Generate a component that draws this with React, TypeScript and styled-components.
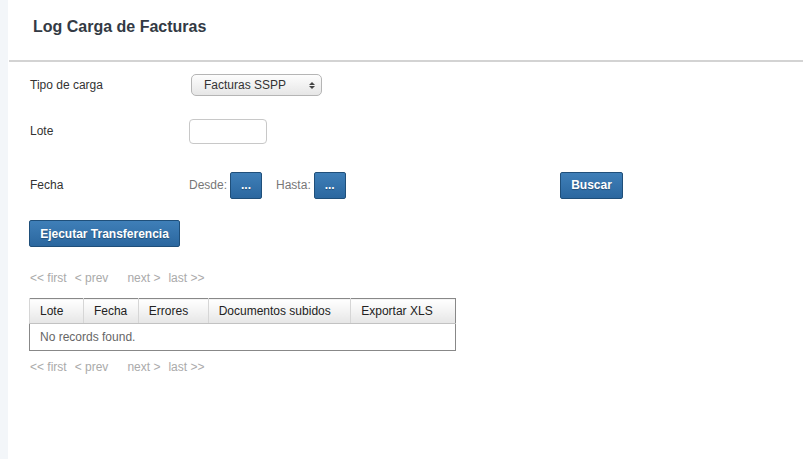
import styled, { createGlobalStyle } from "styled-components";

const GlobalStyle = createGlobalStyle`
  html, body {
    margin: 0;
    padding: 0;
    background: #fff;
    font-family: "Liberation Sans", Arial, sans-serif;
  }
`;

const Page = styled.div`
  display: flex;
  min-height: 459px;
`;

const SideStrip = styled.div`
  width: 8px;
  flex-shrink: 0;
  background: #f3f6f9;
`;

const Main = styled.div`
  flex: 1;
  padding-left: 1px;
`;

const Header = styled.div`
  display: flex;
  align-items: center;
  padding-left: 24px;
  border-bottom: 2px solid #d3d3d3;
  box-sizing: border-box;
  height: 62px;
  padding-bottom: 6px;
`;

const Title = styled.h1`
  margin: 0;
  font-size: 16px;
  font-weight: bold;
  color: #333a44;
`;

const Body = styled.div`
  padding: 0 0 0 20px;
`;

const FormGrid = styled.div`
  display: grid;
  grid-template-columns: 160px auto;
  align-items: center;
  width: 594px;
`;

const Label = styled.div<{ $h: number }>`
  font-size: 12px;
  color: #333;
  height: ${(p) => p.$h}px;
  display: flex;
  align-items: center;
  padding-left: 1px;
`;

const Cell = styled.div<{ $h: number }>`
  height: ${(p) => p.$h}px;
  display: flex;
  align-items: center;
`;

const Select = styled.div`
  margin-left: 2px;
  width: 131px;
  height: 22px;
  box-sizing: border-box;
  border: 1px solid #b5b5b5;
  border-radius: 5px;
  background: linear-gradient(#fdfdfd, #e6e6e6);
  display: flex;
  align-items: center;
  justify-content: space-between;
  padding: 0 6px 0 12px;
  font-size: 12px;
  color: #333;
`;

const Arrows = styled.span`
  display: flex;
  flex-direction: column;
  gap: 1px;
  &::before,
  &::after {
    content: "";
    border-left: 3px solid transparent;
    border-right: 3px solid transparent;
  }
  &::before {
    border-bottom: 3px solid #444;
  }
  &::after {
    border-top: 3px solid #444;
  }
`;

const TextInput = styled.input`
  width: 78px;
  height: 25px;
  box-sizing: border-box;
  border: 1px solid #c8c8c8;
  border-radius: 4px;
  padding: 0 4px;
  outline: none;
`;

const DateRow = styled.div`
  display: flex;
  align-items: center;
  width: 100%;
`;

const DateLabel = styled.span`
  font-size: 12px;
  color: #777;
  margin-right: 3px;
`;

const BlueButton = styled.button<{ $w: number }>`
  width: ${(p) => p.$w}px;
  height: 27px;
  box-sizing: border-box;
  border: 1px solid #1f4f7a;
  border-radius: 2px;
  background: linear-gradient(#3f7fb8, #2b679f);
  color: #fff;
  font-family: "Liberation Sans", Arial, sans-serif;
  font-size: 12px;
  font-weight: bold;
  text-shadow: 0 1px 1px rgba(0, 0, 0, 0.3);
  padding: 0;
  cursor: pointer;
`;

const Spacer = styled.span<{ $w: number }>`
  width: ${(p) => p.$w}px;
  flex-shrink: 0;
`;

const Grow = styled.span`
  flex: 1;
`;

const ActionRow = styled.div<{ $top: number }>`
  margin-top: ${(p) => p.$top}px;
`;

const Pager = styled.div`
  display: flex;
  gap: 8px;
  font-size: 12px;
  color: #aaa;
  padding-left: 1px;
  height: 16px;
  align-items: center;
`;

const PagerGap = styled.span`
  width: 3px;
`;

const Table = styled.table`
  border-collapse: collapse;
  width: 427px;
  border: 1px solid #888;
  margin: 12px 0 8px;
  font-size: 12px;
`;

const Th = styled.th<{ $w: number }>`
  width: ${(p) => p.$w}px;
  height: 25px;
  padding: 0 0 0 10px;
  text-align: left;
  font-weight: normal;
  color: #222;
  background: linear-gradient(#fff, #e6e6e6);
  border-bottom: 1px solid #c2c2c2;
  border-left: 1px solid #d6d6d6;
  box-sizing: border-box;
`;

const Td = styled.td`
  height: 26px;
  padding: 0 10px;
  color: #666;
`;

const cols: [string, number][] = [
  ["Lote", 54],
  ["Fecha", 55],
  ["Errores", 70],
  ["Documentos subidos", 143],
  ["Exportar XLS", 105],
];

function Paginator() {
  return (
    <Pager>
      <span>&lt;&lt; first</span>
      <span>&lt; prev</span>
      <PagerGap />
      <span>next &gt;</span>
      <span>last &gt;&gt;</span>
    </Pager>
  );
}

export default function App() {
  return (
    <>
      <GlobalStyle />
      <Page>
        <SideStrip />
        <Main>
          <Header>
            <Title>Log Carga de Facturas</Title>
          </Header>
          <Body>
            <FormGrid>
              <Label $h={46}>Tipo de carga</Label>
              <Cell $h={46}>
                <Select>
                  Facturas SSPP
                  <Arrows />
                </Select>
              </Cell>
              <Label $h={46}>Lote</Label>
              <Cell $h={46}>
                <TextInput />
              </Cell>
              <Label $h={62}>Fecha</Label>
              <Cell $h={62}>
                <DateRow>
                  <DateLabel>Desde:</DateLabel>
                  <BlueButton $w={32}>...</BlueButton>
                  <Spacer $w={14} />
                  <DateLabel>Hasta:</DateLabel>
                  <BlueButton $w={32}>...</BlueButton>
                  <Grow />
                  <BlueButton $w={63}>Buscar</BlueButton>
                </DateRow>
              </Cell>
            </FormGrid>
            <ActionRow $top={4}>
              <BlueButton $w={151}>Ejecutar Transferencia</BlueButton>
            </ActionRow>
            <ActionRow $top={23}>
              <Paginator />
            </ActionRow>
            <Table>
              <thead>
                <tr>
                  {cols.map(([name, w]) => (
                    <Th key={name} $w={w}>
                      {name}
                    </Th>
                  ))}
                </tr>
              </thead>
              <tbody>
                <tr>
                  <Td colSpan={5}>No records found.</Td>
                </tr>
              </tbody>
            </Table>
            <Paginator />
          </Body>
        </Main>
      </Page>
    </>
  );
}
